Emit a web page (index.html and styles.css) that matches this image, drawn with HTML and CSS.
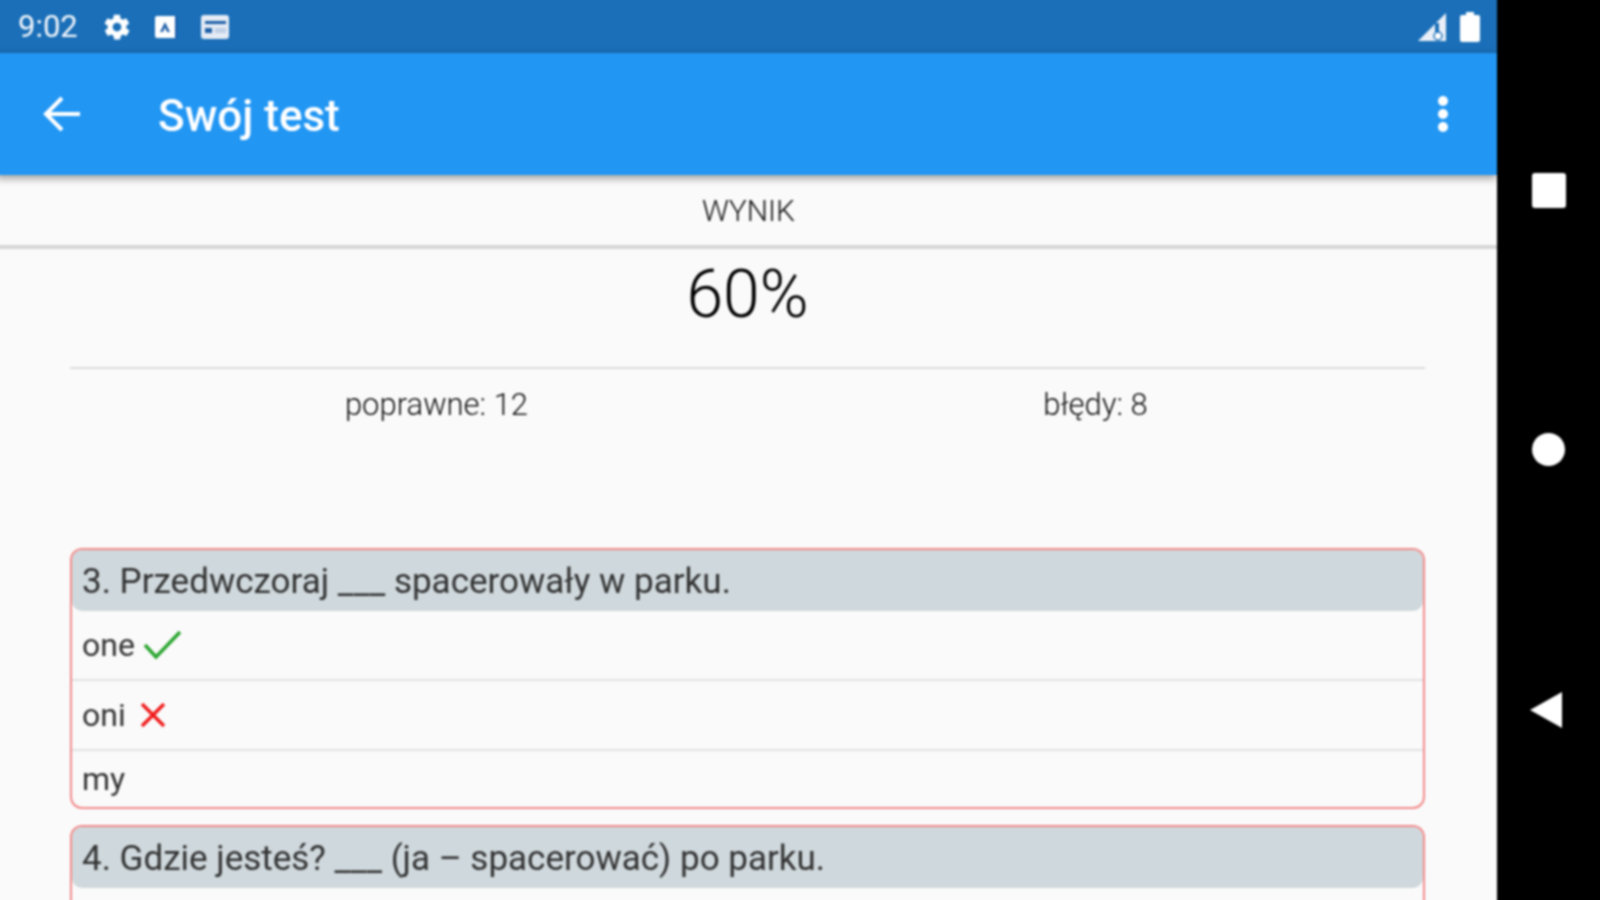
FILE: index.html
```html
<!DOCTYPE html>
<html lang="pl">
<head>
    <meta charset="UTF-8">
    <title>Swój test</title>
    <link rel="stylesheet" href="styles.css">
</head>
<body>

<div class="page">
    <div class="screen">
        <div class="status-bar">
            <span class="time">9:02</span>
            <!-- settings -->
            <svg class="status-icon" width="30" height="30" viewBox="0 0 24 24"><path fill="#fff" d="M19.400 13a7.500 7.500 0 0 0 0-2l2.100-1.600a.5.5 0 0 0 .1-.6l-2-3.500a.5.5 0 0 0-.6-.2l-2.500 1a7.300 7.300 0 0 0-1.700-1l-.4-2.600a.5.5 0 0 0-.5-.4h-4a.5.5 0 0 0-.5.4l-.4 2.600a7.300 7.300 0 0 0-1.700 1l-2.500-1a.5.5 0 0 0-.6.2l-2 3.500a.5.5 0 0 0 .1.6L4.600 11a7.500 7.500 0 0 0 0 2l-2.100 1.600a.5.5 0 0 0-.1.6l2 3.500c.1.2.4.3.6.2l2.500-1c.5.4 1.100.7 1.700 1l.4 2.600c0 .2.2.4.5.4h4c.3 0 .5-.2.5-.4l.4-2.600c.6-.3 1.200-.6 1.700-1l2.500 1c.2.1.5 0 .6-.2l2-3.500a.5.5 0 0 0-.1-.6zM12 15.500a3.500 3.500 0 1 1 0-7 3.500 3.500 0 0 1 0 7z"/></svg>
            <!-- A badge -->
            <svg class="status-icon" width="24" height="24" viewBox="0 0 24 24"><rect x="1" y="1" width="22" height="22" rx="2" fill="#fff"/><rect x="21" y="1" width="2" height="22" fill="#1f5fa8"/><path fill="#1f5fa8" d="M11 7l5 10h-3l-2-4.500L9 17H6z"/></svg>
            <!-- calendar card -->
            <svg class="status-icon" width="30" height="26" viewBox="0 0 30 26"><rect x="1" y="1" width="28" height="24" rx="3" fill="#e4ebf4"/><rect x="5" y="7" width="21" height="3" fill="#1f5fa8"/><rect x="5" y="14" width="7" height="5" fill="#1f5fa8"/><rect x="15" y="14" width="11" height="5" fill="#bfd0e6"/></svg>
            <span class="spacer"></span>
            <!-- signal -->
            <svg width="30" height="30" viewBox="0 0 30 30"><path fill="#e9eff7" d="M1 29L29 1v28z"/><rect x="18" y="11" width="4" height="9" fill="#1a6fb8"/><circle cx="21" cy="24" r="4" fill="#fff" stroke="#1a6fb8" stroke-width="1.500"/></svg>
            <!-- battery -->
            <svg class="battery" width="20" height="30" viewBox="0 0 20 30"><path fill="#fff" d="M6 0h8v3h4a2 2 0 0 1 2 2v23a2 2 0 0 1-2 2H2a2 2 0 0 1-2-2V5a2 2 0 0 1 2-2h4z"/></svg>
        </div>

        <div class="app-bar">
            <svg class="back" width="37" height="36" viewBox="0 0 37 36"><path fill="none" stroke="#fff" stroke-width="4" d="M37 18H4M19 2L3 18l16 16"/></svg>
            <h1 class="title">Swój test</h1>
            <span class="spacer"></span>
            <div class="more"><i></i><i></i><i></i></div>
        </div>

        <div class="tab-label">WYNIK</div>

        <div class="content">
            <div class="percent">60%</div>
            <div class="counts">
                <div>poprawne: 12</div>
                <div>błędy: 8</div>
            </div>

            <div class="question">
                <div class="question-title">3. Przedwczoraj ___ spacerowały w parku.</div>
                <div class="answer">one
                    <svg width="40" height="32" viewBox="0 0 40 32"><path fill="none" stroke="#2aa52f" stroke-width="3.500" d="M2 16l11 12L37 3"/></svg>
                </div>
                <div class="answer">oni
                    <svg class="cross" width="26" height="26" viewBox="0 0 26 26"><path fill="none" stroke="#f01c1c" stroke-width="3.500" d="M2 2l22 22M24 2L2 24"/></svg>
                </div>
                <div class="answer last">my</div>
            </div>

            <div class="question">
                <div class="question-title">4. Gdzie jesteś? ___ (ja – spacerować) po parku.</div>
                <div class="answer"></div>
            </div>
        </div>
    </div>

    <div class="nav-bar">
        <div class="nav-square"></div>
        <div class="nav-circle"></div>
        <svg class="nav-back" width="34" height="38" viewBox="0 0 34 38"><path fill="#fff" d="M1 19L33 1v36z"/></svg>
    </div>
</div>

</body>
</html>
```

FILE: styles.css
```css
html, body {
    margin: 0;
    height: 900px;
    overflow: hidden;
    background: #000;
}

body {
    font-family: Roboto, sans-serif;
    color: #333;
}

/* 4px bleed on every side, so the blur does not fade at the window edge */
.page {
    display: flex;
    width: 1608px;
    height: 908px;
    margin: -4px;
    background: #000;
    filter: blur(0.8px);
}

.screen {
    width: 1501px;
    height: 908px;
    overflow: hidden;
    background: #fafafa;
    flex-shrink: 0;
}

.spacer {
    flex: 1;
}

/* status bar */
.status-bar {
    height: 53px;
    background: #1a6fb8;
    display: flex;
    align-items: center;
    padding: 4px 17px 0 22px;
    color: #f2f6fb;
}

.time {
    font-size: 31px;
    margin-right: 24px;
}

.status-icon {
    margin-right: 22px;
}

.battery {
    margin-left: 13px;
}

/* app bar */
.app-bar {
    height: 122px;
    background: #2196f3;
    display: flex;
    align-items: center;
    padding: 0 49px 0 47px;
    box-shadow: 0 3px 8px rgba(0, 0, 0, 0.4);
    position: relative;
}

.title {
    margin: 0 0 0 78px;
    font-size: 44px;
    line-height: 48px;
    padding-top: 4px;
    font-weight: 500;
    color: #fff;
}

.more i {
    display: block;
    width: 10px;
    height: 10px;
    border-radius: 50%;
    background: #fff;
    margin: 3px 0;
}

/* result */
.tab-label {
    height: 70px;
    padding-left: 4px;
    border-bottom: 4px solid #d6d6d6;
    display: flex;
    align-items: center;
    justify-content: center;
    font-size: 30px;
    font-weight: 300;
    color: #111;
}

.content {
    padding: 0 72px 0 74px;
}

.percent {
    height: 118px;
    border-bottom: 2px solid #dcdcdc;
    text-align: center;
    font-size: 66px;
    line-height: 92px;
    color: #000;
    font-weight: 300;
}

.counts {
    display: grid;
    grid-template-columns: 1fr 1fr;
    text-align: center;
    font-size: 31px;
    line-height: 36px;
    padding: 18px 0 0 37px;
    height: 179px;
    box-sizing: border-box;
    font-weight: 300;
    color: #111;
}

/* question card */
.question {
    border: 2px solid #f28b8b;
    border-radius: 12px;
    margin-bottom: 16px;
}

.question-title {
    height: 61px;
    line-height: 64px;
    background: #cfd8dc;
    border-radius: 10px;
    padding-left: 10px;
    font-size: 35px;
}

.answer {
    height: 70px;
    border-bottom: 2px solid #e2e2e2;
    box-sizing: border-box;
    display: flex;
    align-items: center;
    gap: 8px;
    padding-left: 10px;
    font-size: 32px;
}

.answer .cross {
    margin-left: 6px;
}

.answer.last {
    height: 56px;
    border-bottom: 0;
}

/* android nav */
.nav-bar {
    flex: 1;
    display: flex;
    flex-direction: column;
    align-items: center;
    padding: 177px 4px 0 0;
    gap: 225px;
}

.nav-square {
    width: 34px;
    height: 35px;
    background: #fff;
    border-radius: 3px;
}

.nav-circle {
    width: 33px;
    height: 33px;
    background: #fff;
    border-radius: 50%;
}

.nav-back {
    margin-right: 5px;
}
```
